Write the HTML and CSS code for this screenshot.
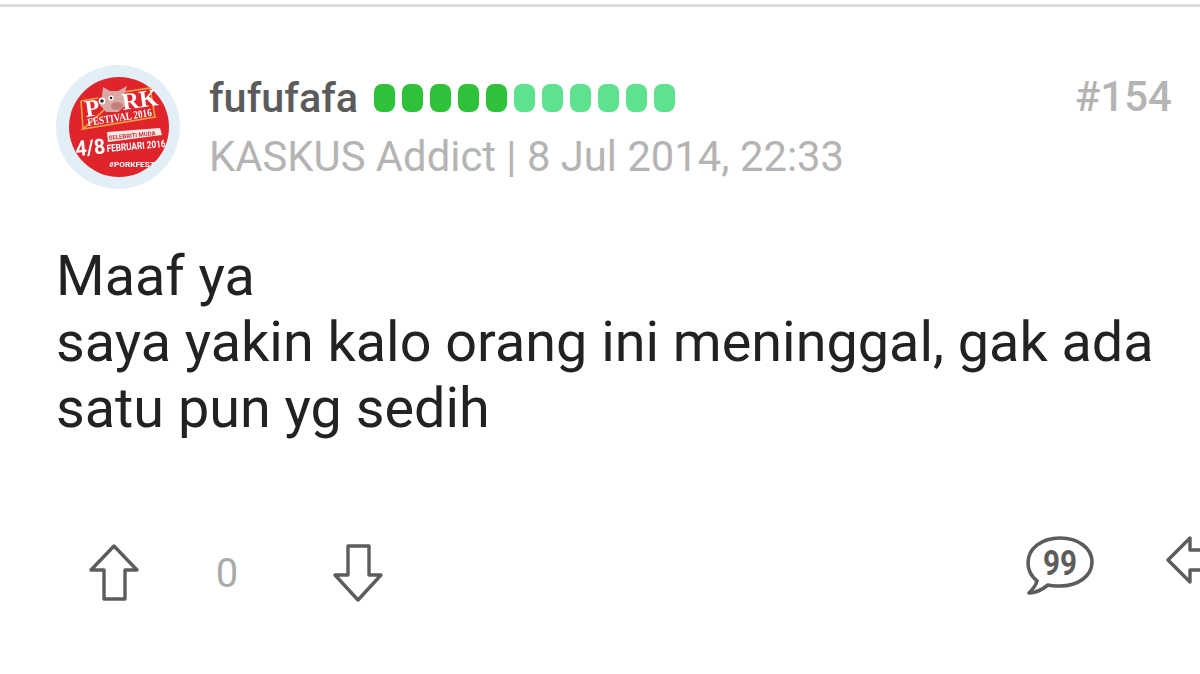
FILE: index.html
```html
<!DOCTYPE html>
<html lang="id">
<head>
<meta charset="utf-8">
<title>fufufafa</title>
<link rel="stylesheet" href="styles.css">
</head>
<body>
<div class="topline"></div>
<article class="post">
  <header class="head">
    <div class="avatar">
      <svg viewBox="0 0 124 124" width="124" height="124">
        <circle cx="62" cy="62" r="62" fill="#e3eff7"/>
        <g class="logo">
        <circle cx="63" cy="62" r="50" fill="#e0242c"/>
        <path d="M25 36 L42 33 M68 27 L94 23 L99 52 L27 64 Z M25 36 L27 64" fill="none" stroke="#f0a33a" stroke-width="1.6"/>
        <path d="M46 31 L47 22 L54 26 L62 26 L71 21 L68 31 L69 41 L62 47 L50 47 L44 40 Z" fill="#d9a9a5"/>
        <ellipse cx="61" cy="41" rx="6" ry="4" fill="#c47f7d"/>
        <circle cx="46" cy="36" r="3.4" fill="#fff"/><circle cx="46" cy="36" r="1.7" fill="#222"/>
        <circle cx="55" cy="33" r="2.6" fill="#fff"/><circle cx="55" cy="33" r="1.3" fill="#222"/>
        <text x="30" y="52" class="lg-p" transform="rotate(-8 30 52)">P</text>
        <text x="67" y="45" class="lg-p" transform="rotate(-8 67 45)">RK</text>
        <text x="32" y="61" class="lg-f" transform="rotate(-9 32 61)" textLength="65" lengthAdjust="spacingAndGlyphs">FESTIVAL 2016</text>
        <path d="M51 67 L104 63 L106 70 L52 77 Z" fill="#f6e9e6"/>
        <text x="53" y="75" class="lg-s" transform="rotate(-6 53 75)">SELEBRITI MUDA</text>
        <text x="20" y="91" class="lg-d" transform="rotate(-5 20 91)" textLength="30" lengthAdjust="spacingAndGlyphs">4/8</text>
        <text x="51" y="87" class="lg-m" transform="rotate(-5 51 87)" textLength="59" lengthAdjust="spacingAndGlyphs">FEBRUARI 2016</text>
        <text x="53" y="102" class="lg-t" textLength="46" lengthAdjust="spacingAndGlyphs">#PORKFEST</text>
        </g>
      </svg>
    </div>
    <div class="who">
      <div class="name-row">
        <span class="name">fufufafa</span>
        <span class="rep">
          <i class="pip on"></i><i class="pip on"></i><i class="pip on"></i><i class="pip on"></i><i class="pip on"></i><i class="pip"></i><i class="pip"></i><i class="pip"></i><i class="pip"></i><i class="pip"></i><i class="pip"></i>
        </span>
      </div>
      <div class="meta">KASKUS Addict | 8 Jul 2014, 22:33</div>
    </div>
    <div class="num">#154</div>
  </header>
  <div class="body">Maaf ya<br>saya yakin kalo orang ini meninggal, gak ada<br>satu pun yg sedih</div>
  <footer class="actions">
    <div class="vote">
      <svg class="arrow" viewBox="0 0 50 58" width="50" height="58"><path d="M25 2 L48 26 H36 V55 H15 V26 H2 Z" fill="none" stroke="#5c5c5c" stroke-width="3.4" stroke-linejoin="round"/></svg>
      <span class="count">0</span>
      <svg class="arrow" viewBox="0 0 50 58" width="50" height="58"><path d="M15 2 H36 V31 H48 L25 56 L2 31 H15 Z" fill="none" stroke="#5c5c5c" stroke-width="3.4" stroke-linejoin="round"/></svg>
    </div>
    <div class="tools">
      <svg class="quote" viewBox="0 0 68 60" width="68" height="60">
        <path d="M11 45 C5 40 2 34 2 27 C2 12 16 2 34 2 C52 2 66 12 66 26 C66 40 52 50 34 50 C30 50 26 50 22 49 C17 53 10 57 3 57 C7 53 10 50 11 45 Z" fill="none" stroke="#5c5c5c" stroke-width="3.6" stroke-linejoin="round"/>
        <text x="17" y="39" class="q-text" textLength="34" lengthAdjust="spacingAndGlyphs">99</text>
      </svg>
      <svg class="share" viewBox="0 0 34 48" width="34" height="48"><path d="M2 24 L24 2 V14 H40 V34 H24 V46 Z" fill="none" stroke="#5c5c5c" stroke-width="3.4" stroke-linejoin="round"/></svg>
    </div>
  </footer>
</article>
</body>
</html>
```

FILE: styles.css
```css
* { box-sizing: border-box; }
html, body { margin: 0; padding: 0; }
body {
  width: 1200px;
  height: 674px;
  overflow: hidden;
  background: #fff;
  font-family: Roboto, "Liberation Sans", sans-serif;
}
.topline {
  height: 7px;
  border-top: 4px solid #fff;
  background: #dcdcdc;
}
.post { padding: 58px 28px 0 56px; }
.head { display: flex; align-items: flex-start; }
.avatar { flex: none; width: 124px; height: 124px; margin-right: 30px; }
.avatar svg { display: block; }
.logo { filter: blur(0.35px); }
.who { flex: 1; padding-top: 7px; margin-left: -1px; }
.name-row { display: flex; align-items: center; height: 52px; }
.name { font-size: 41.4px; font-weight: 500; color: #5b5b5b; margin-right: 16px; }
.rep { display: flex; gap: 7px; }
.pip { display: block; width: 21px; height: 28px; border-radius: 8px; background: #5fe28f; }
.pip.on { background: #2fc13a; }
.meta { font-size: 41.8px; line-height: 52px; margin-top: 7px; color: #b4b4b4; white-space: nowrap; }
.num { font-size: 42px; font-weight: 500; line-height: 52px; padding-top: 6px; color: #b4b4b4; }
.body {
  margin-top: 54px;
  font-size: 55.75px;
  line-height: 66px;
  color: #222;
  white-space: nowrap;
}
.actions {
  display: flex;
  justify-content: space-between;
  align-items: flex-start;
  margin-top: 95px;
  margin-right: -28px;
}
.vote { display: flex; align-items: center; padding-left: 33px; height: 64px; margin-top: 5px; }
.count { font-size: 40px; color: #aaa; width: 176px; text-align: center; margin-right: 18px; }
.arrow { display: block; }
.tools { display: flex; align-items: flex-start; gap: 72px; }
.quote, .share { display: block; flex: none; }
.lg-p { font: 700 24px "Liberation Serif", serif; fill: #fff; }
.lg-f { font: 700 11px "Liberation Serif", serif; fill: #fff; }
.lg-s { font: 700 6px Roboto, sans-serif; fill: #c9323a; }
.lg-d { font: 700 21px Roboto, sans-serif; fill: #fff; }
.lg-m { font: 700 10px Roboto, sans-serif; fill: #fff; }
.lg-t { font: 700 8px Roboto, sans-serif; fill: #fff; }
.q-text { font: 700 35px Roboto, sans-serif; fill: #5c5c5c; }
```
